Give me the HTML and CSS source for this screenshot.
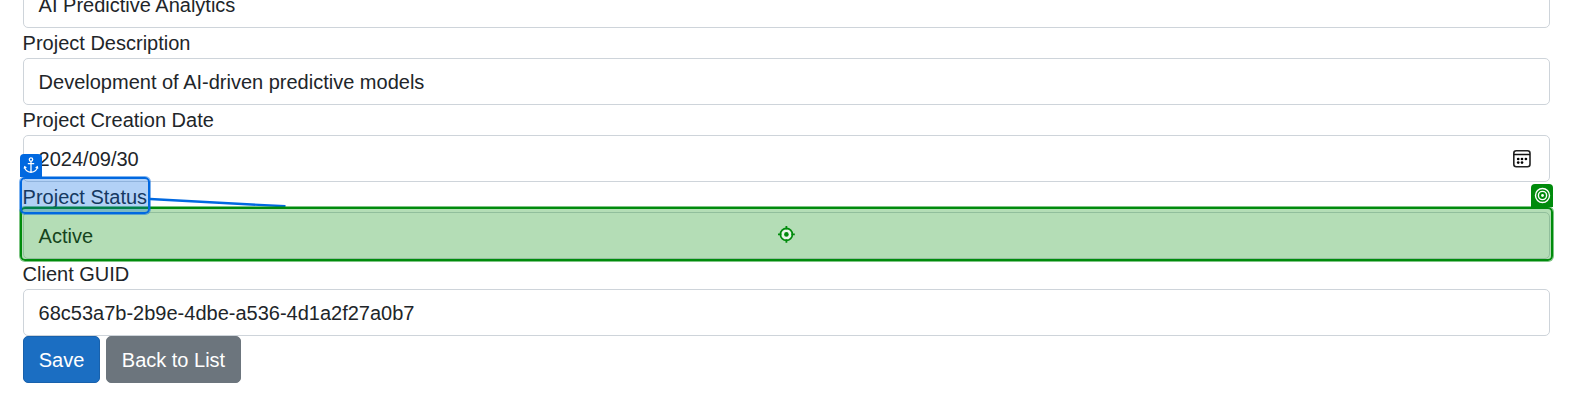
FILE: index.html
```html
<!DOCTYPE html>
<html lang="en">
<head>
<meta charset="utf-8">
<title>Edit Project</title>
<link rel="stylesheet" href="styles.css">
</head>
<body>
<main class="form">
  <div class="control">AI Predictive Analytics</div>
  <div class="label">Project Description</div>
  <div class="control">Development of AI-driven predictive models</div>
  <div class="label">Project Creation Date</div>
  <div class="control">
    <span>2024/09/30</span>
    <svg class="calendar" width="20" height="20" viewBox="0 0 20 20">
      <rect x="1.8" y="1.8" width="16.2" height="16" rx="2.5" fill="none" stroke="#222" stroke-width="1.6"/>
      <path d="M1.8 5.5H18" stroke="#111" stroke-width="1.5"/>
      <g fill="#000"><circle cx="6.2" cy="10" r="1.35"/><circle cx="10" cy="10" r="1.35"/><circle cx="13.9" cy="10" r="1.35"/><circle cx="6.2" cy="13.6" r="1.35"/><circle cx="10" cy="13.6" r="1.35"/></g>
    </svg>
  </div>
  <div class="label">Project Status</div>
  <div class="control">Active</div>
  <div class="label">Client GUID</div>
  <div class="control">68c53a7b-2b9e-4dbe-a536-4d1a2f27a0b7</div>
  <div class="actions">
    <div class="btn save">Save</div>
    <div class="btn back">Back to List</div>
  </div>
</main>
<svg class="connector" width="140" height="12" viewBox="0 0 140 12"><path d="M0 2L135.5 9.3" stroke="#0068e0" stroke-width="2.4" fill="none"/></svg>
<div class="highlight target"></div>
<div class="highlight anchor"></div>
<div class="tab anchor-tab">
  <svg width="22" height="22" viewBox="0 0 22 22" fill="none" stroke="#fff" stroke-width="1.3">
    <circle cx="11" cy="5.6" r="1.7"/><path d="M11 7.3V18M7.8 9.6H14.2M4.7 13C5 16 7.5 18 11 18.4C14.5 18 17 16 17.3 13M4.2 14.6L4.7 12.8L6.4 13.8M17.8 14.6L17.3 12.8L15.6 13.8"/>
  </svg>
</div>
<div class="tab target-tab">
  <svg width="22" height="22" viewBox="0 0 22 22" fill="none" stroke="#fff" stroke-width="1.4">
    <circle cx="11.5" cy="11.5" r="7"/><circle cx="11.5" cy="11.5" r="4.1"/><circle cx="11.5" cy="11.5" r="1.4" fill="#fff" stroke="none"/>
  </svg>
</div>
<svg class="crosshair" width="18" height="18" viewBox="0 0 18 18">
  <circle cx="9.4" cy="9.4" r="6" fill="#e8f5e8" stroke="#008b0c" stroke-width="1.7"/>
  <circle cx="9.4" cy="9.4" r="2.3" fill="#008b0c"/>
  <path d="M9.4 1V4.5M9.4 14.3V17.8M1 9.4H4.5M14.3 9.4H17.8" stroke="#008b0c" stroke-width="1.8"/>
</svg>
</body>
</html>
```
FILE: styles.css
```css
* { box-sizing: border-box; }
body {
  position: relative;
  height: 419px;
  margin: 0;
  overflow: hidden;
  background: #fff;
  color: #212529;
  font: 20px/30px "Liberation Sans", Arial, sans-serif;
}
.form { margin: -19px 23px 0; }
.control {
  display: flex;
  align-items: center;
  justify-content: space-between;
  height: 47px;
  padding: 0 17px 0 14.6px;
  border: 1px solid #ced4da;
  border-radius: 5px;
}
.label { height: 30px; text-indent: -.4px; }
.actions { display: flex; gap: 6px; }
.btn {
  height: 47px;
  border: 1px solid;
  border-radius: 5px;
  color: #fff;
  line-height: 46px;
  text-align: center;
}
.save { width: 77px; background: #1b6ec2; border-color: #1861ac; }
.back { width: 135px; background: #6c757d; border-color: #6c757d; }
.highlight { position: absolute; border: 2px solid; border-radius: 5px; }
.target {
  left: 20px;
  top: 207px;
  width: 1533px;
  height: 54px;
  border-color: #008b0c;
  background: rgba(0, 139, 8, .295);
  box-shadow: 0 0 0 1px rgba(0, 139, 12, .5);
}
.anchor {
  left: 20px;
  top: 177px;
  width: 130px;
  height: 37px;
  border-color: #0068e0;
  background: rgba(0, 104, 224, .3);
  box-shadow: 0 0 0 1px rgba(0, 104, 224, .5);
}
.tab { position: absolute; width: 22px; height: 23px; border-radius: 4px 4px 0 0; }
.tab svg { display: block; }
.anchor-tab { left: 20px; top: 154px; background: #0068e0; }
.target-tab { left: 1531px; top: 184px; background: #008b0c; }
.connector { position: absolute; left: 150px; top: 197px; }
.crosshair { position: absolute; left: 777px; top: 225px; }
```
